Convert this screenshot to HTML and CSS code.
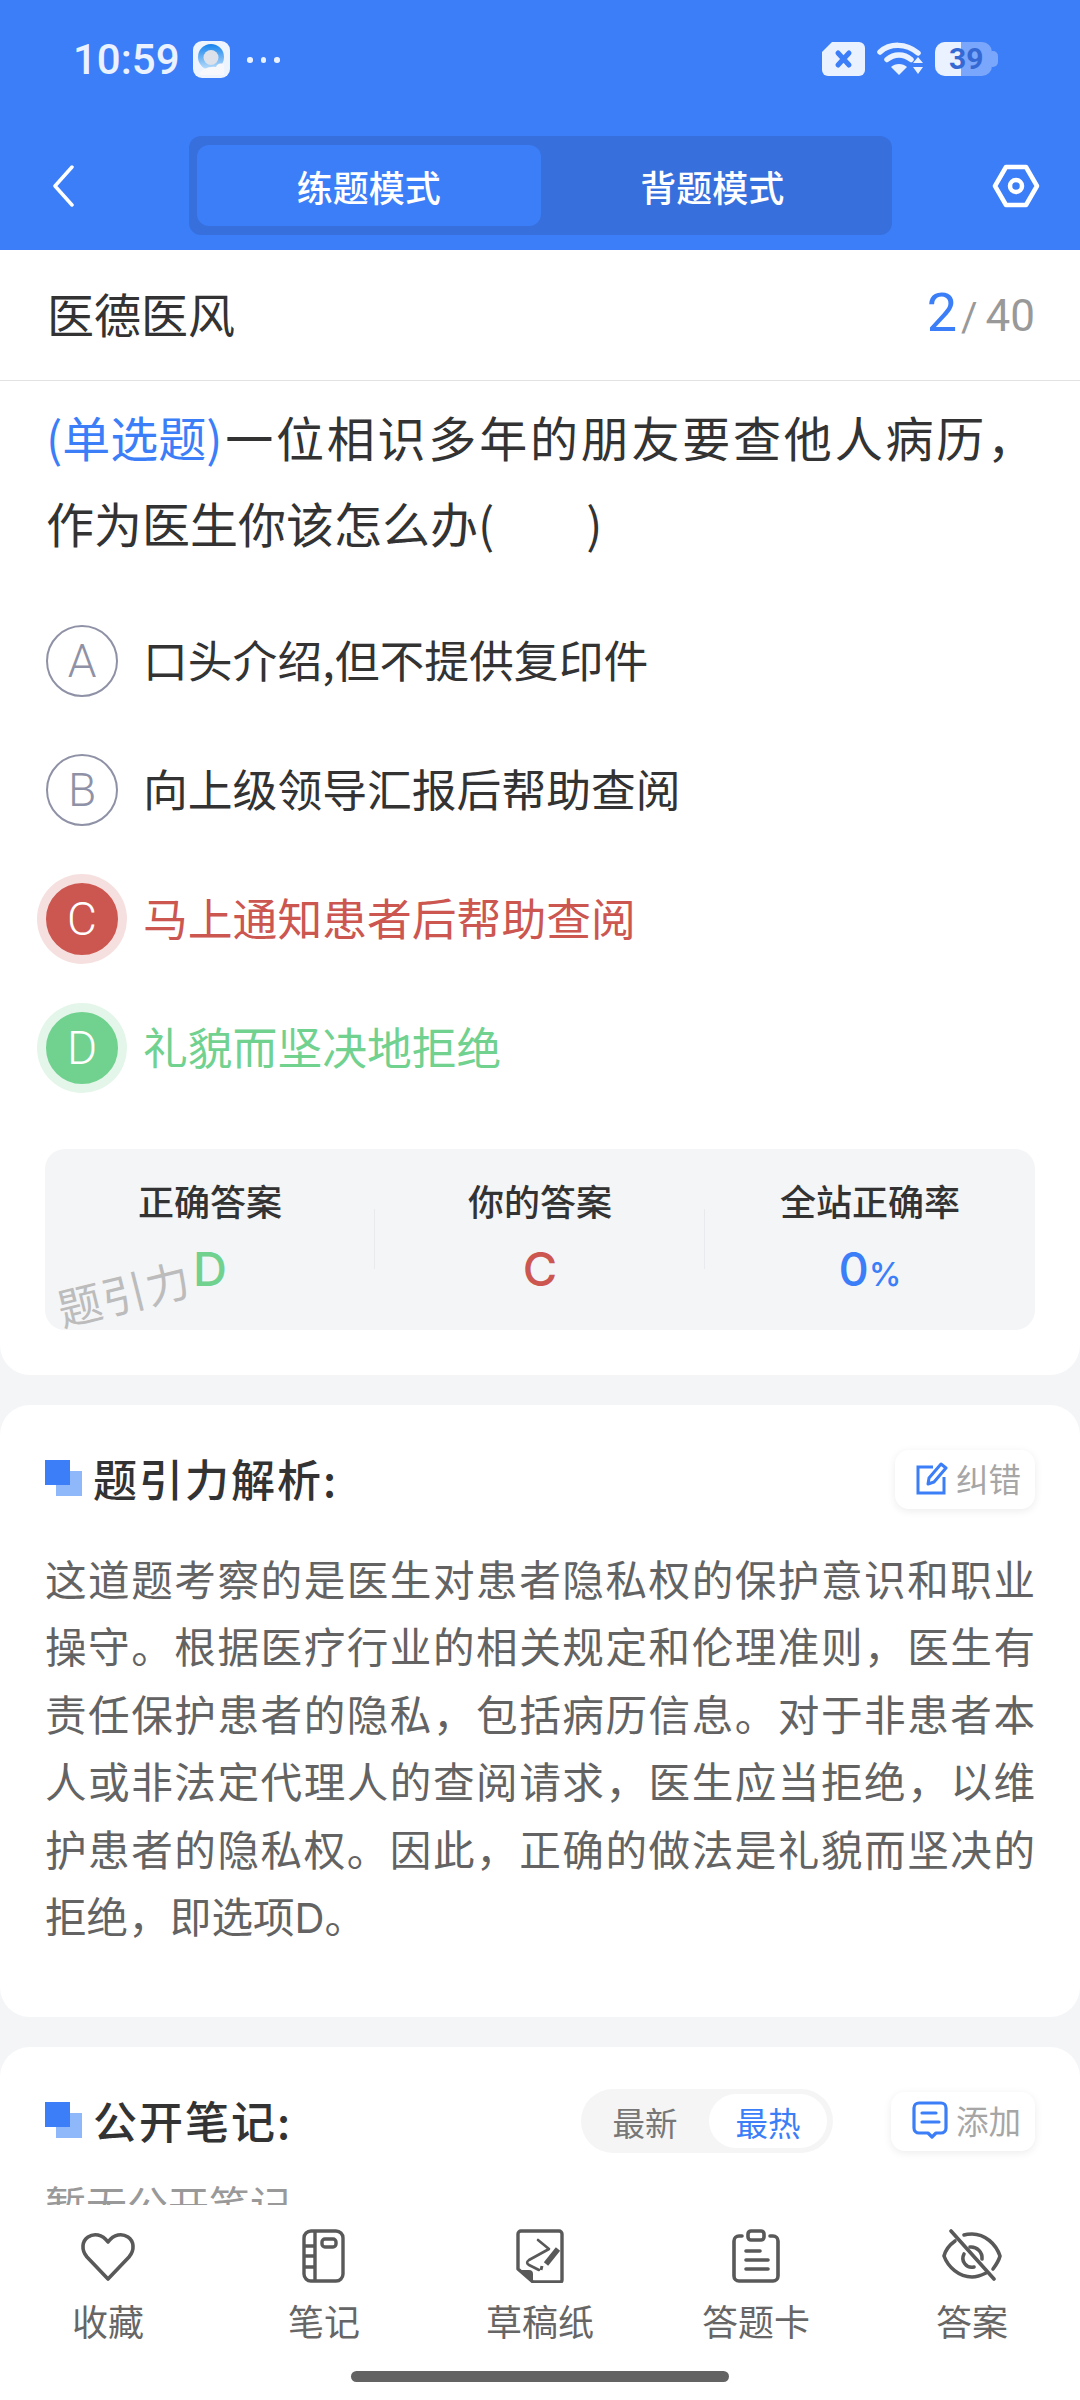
FILE: index.html
```html
<!DOCTYPE html>
<html lang="zh-CN">
<head>
<meta charset="utf-8">
<title>练题模式</title>
<link rel="stylesheet" href="styles.css">
</head>
<body>
<header class="header">
	<div class="status">
		<span class="time">10:59</span>
		<svg class="app-icon" viewBox="0 0 37 37">
			<defs>
				<linearGradient id="ring" x1="0" y1="0" x2="0" y2="1">
					<stop offset="0" stop-color="#1583ee"/>
					<stop offset="1" stop-color="#bfe0fa"/>
				</linearGradient>
			</defs>
			<rect width="37" height="37" rx="9" fill="#eef4fe"/>
			<circle cx="18" cy="16" r="13" fill="url(#ring)"/>
			<circle cx="18" cy="16.500" r="7.500" fill="#dde1e9"/>
			<path d="M6 33c3-5 10-8 17-7 1-3 5-5 8-2v10H8z" fill="#f6f8fc"/>
		</svg>
		<span class="dots"><i></i><i></i><i></i></span>
		<span class="status-right">
			<svg class="sim" viewBox="0 0 43 34">
				<path d="M10 0h27a6 6 0 0 1 6 6v22a6 6 0 0 1-6 6H6a6 6 0 0 1-6-6V10z" fill="#eaf1ff"/>
				<path d="M16 11l11 12M27 11L16 23" stroke="#3b7ef8" stroke-width="5" stroke-linecap="round"/>
			</svg>
			<svg class="wifi" viewBox="0 0 46 33">
				<path d="M3 10C13 1 29 1 41 11" fill="none" stroke="#eaf1ff" stroke-width="5.500" stroke-linecap="round"/>
				<path d="M10 17.500c7-6 17-6 24 0" fill="none" stroke="#eaf1ff" stroke-width="5.500" stroke-linecap="round"/>
				<path d="M14 25c4-4 12-4 16 0l-8 8z" fill="#eaf1ff"/>
				<path d="M36 21l5-6 5 6zM36 25h10l-5 7z" fill="#eaf1ff"/>
			</svg>
			<span class="battery"><span class="battery-fill"></span><span class="battery-num">39</span></span>
		</span>
	</div>
	<nav class="nav">
		<svg class="back" viewBox="0 0 22 42"><path d="M20 2L3 21l17 19" fill="none" stroke="#fff" stroke-width="3.500" stroke-linecap="round" stroke-linejoin="round"/></svg>
		<div class="tabs">
			<span class="tab tab-on">练题模式</span>
			<span class="tab">背题模式</span>
		</div>
		<svg class="gear" viewBox="0 0 48 44">
			<path d="M14 3h20l11 19-11 19H14L3 22z" fill="none" stroke="#fff" stroke-width="4.500" stroke-linejoin="round"/>
			<circle cx="24" cy="22" r="6" fill="none" stroke="#fff" stroke-width="4.500"/>
		</svg>
	</nav>
</header>

<main class="content">
	<section class="card card-first">
		<div class="title-row">
			<span class="title">医德医风</span>
			<span class="count"><b>2</b><em>/</em>40</span>
		</div>
		<div class="question-wrap">
			<p class="question"><span class="q-type">(单选题)</span>一位相识多年的朋友要查他人病历，作为医生你该怎么办(<span class="q-blank"></span>)</p>
			<ul class="options">
				<li class="option"><span class="letter">A</span><span class="opt-text">口头介绍,但不提供复印件</span></li>
				<li class="option"><span class="letter">B</span><span class="opt-text">向上级领导汇报后帮助查阅</span></li>
				<li class="option wrong"><span class="letter">C</span><span class="opt-text">马上通知患者后帮助查阅</span></li>
				<li class="option right"><span class="letter">D</span><span class="opt-text">礼貌而坚决地拒绝</span></li>
			</ul>
			<div class="stats">
				<div class="stat"><span class="stat-label">正确答案</span><span class="stat-val green">D</span></div>
				<div class="stat"><span class="stat-label">你的答案</span><span class="stat-val red">C</span></div>
				<div class="stat"><span class="stat-label">全站正确率</span><span class="stat-val blue">0<small>%</small></span></div>
				<span class="watermark">题引力</span>
			</div>
		</div>
	</section>

	<section class="card card-analysis">
		<div class="card-head">
			<h2 class="head-title"><span class="squares"></span>题引力解析:</h2>
			<span class="chip">
				<svg class="chip-icon" viewBox="0 0 32 34">
					<path d="M17 6H2v26h26V16" fill="none" stroke="#3b7ef8" stroke-width="3"/>
					<path d="M12 23l1-6L25 3l5 4-12 14z" fill="none" stroke="#3b7ef8" stroke-width="3" stroke-linejoin="round"/>
				</svg>
				纠错
			</span>
		</div>
		<p class="analysis">这道题考察的是医生对患者隐私权的保护意识和职业操守。根据医疗行业的相关规定和伦理准则，医生有责任保护患者的隐私，包括病历信息。对于非患者本人或非法定代理人的查阅请求，医生应当拒绝，以维护患者的隐私权。因此，正确的做法是礼貌而坚决的拒绝，即选项D。</p>
	</section>

	<section class="card card-notes">
		<div class="card-head">
			<h2 class="head-title"><span class="squares"></span>公开笔记:</h2>
			<div class="head-tools">
				<div class="toggle">
					<span class="toggle-item">最新</span>
					<span class="toggle-item toggle-on">最热</span>
				</div>
				<span class="chip chip-add">
					<svg class="chip-icon" viewBox="0 0 36 38">
						<path d="M7 2h22a5 5 0 0 1 5 5v20a5 5 0 0 1-5 5h-5l-4 4-4-4H7a5 5 0 0 1-5-5V7a5 5 0 0 1 5-5z" fill="none" stroke="#3b7ef8" stroke-width="3.200" stroke-linejoin="round"/>
						<path d="M10 12h14M10 21h17" stroke="#3b7ef8" stroke-width="3.200" stroke-linecap="round"/>
					</svg>
					添加
				</span>
			</div>
		</div>
		<p class="empty">暂无公开笔记</p>
	</section>
</main>

<footer class="tabbar">
	<div class="tabbar-items">
		<div class="bar-item">
			<svg class="bar-icon" viewBox="0 0 60 54"><path d="M30 50L9 28C3 21 4 12 10 8c6-4 14-3 20 5 6-8 14-9 20-5 6 4 7 13 1 20z" fill="none" stroke="#595959" stroke-width="3.600" stroke-linejoin="round"/></svg>
			<span>收藏</span>
		</div>
		<div class="bar-item">
			<svg class="bar-icon" viewBox="0 0 60 54">
				<g fill="none" stroke="#595959" stroke-width="3.400">
					<rect x="10" y="2" width="39" height="50" rx="7"/>
					<path d="M21 2v50M10 17h11M10 27h11M10 38h11"/>
					<rect x="28" y="10" width="14" height="8" rx="3"/>
				</g>
			</svg>
			<span>笔记</span>
		</div>
		<div class="bar-item">
			<svg class="bar-icon" viewBox="0 0 60 54">
				<path d="M11 2h38a3 3 0 0 1 3 3v46a2 2 0 0 1-2 2H23L8 40V5a3 3 0 0 1 3-3z" fill="none" stroke="#595959" stroke-width="3.400" stroke-linejoin="round"/>
				<path d="M9 41h10q4 0 4 4v7z" fill="#595959"/>
				<path d="M28 11l11 9-20 11c-3 2-2 4 0 5l10 5" fill="none" stroke="#595959" stroke-width="2.600" stroke-linecap="round" stroke-linejoin="round"/>
				<path d="M48 20L36 35" stroke="#595959" stroke-width="5.500"/>
				<path d="M31 41l1-4" stroke="#595959" stroke-width="3"/>
			</svg>
			<span>草稿纸</span>
		</div>
		<div class="bar-item">
			<svg class="bar-icon" viewBox="0 0 60 54">
				<g fill="none" stroke="#595959" stroke-width="3.600" stroke-linecap="round" stroke-linejoin="round">
					<path d="M16 7h-3a5 5 0 0 0-5 5v35a5 5 0 0 0 5 5h34a5 5 0 0 0 5-5V12a5 5 0 0 0-5-5h-3"/>
					<rect x="22" y="2" width="16" height="9" rx="3"/>
					<path d="M20 22h14M20 31h22M20 40h22"/>
				</g>
			</svg>
			<span>答题卡</span>
		</div>
		<div class="bar-item">
			<svg class="bar-icon" viewBox="0 0 60 54">
				<g fill="none" stroke="#595959" stroke-width="3.600" stroke-linecap="round" stroke-linejoin="round">
					<path d="M13 12C6 17 3 23 2 27c4 11 15 21 28 21 5 0 10-2 14-4M22 6c3-1 5-1 8-1 13 0 24 10 28 22-1 4-4 9-7 13"/>
					<path d="M22 25a9 9 0 0 0 10 13M28 18a11 11 0 0 1 12 12"/>
					<path d="M9 2l43 48"/>
				</g>
			</svg>
			<span>答案</span>
		</div>
	</div>
	<div class="home-bar"></div>
</footer>
</body>
</html>
```

FILE: styles.css
```css
* { box-sizing: border-box; }
html, body { margin: 0; padding: 0; }
body {
	width: 1080px;
	height: 2400px;
	display: flex;
	flex-direction: column;
	overflow: hidden;
	background: #f4f5f7;
	color: #333;
	font-family: "Noto Sans CJK SC", "Noto Sans", sans-serif;
}
p, ul, h2 { margin: 0; padding: 0; }
ul { list-style: none; }

/* header */
.header { background: #3b7ef8; height: 250px; flex: none; }
.status { height: 116px; padding: 41px 80px 0 73px; display: flex; align-items: flex-start; }
.time { font-family: Roboto, sans-serif; font-weight: 500; font-size: 42px; line-height: 37px; color: #eaf1ff; width: 120px; }
.app-icon { width: 37px; height: 37px; }
.dots { display: flex; gap: 8px; margin: 16px 0 0 17px; }
.dots i { width: 5.5px; height: 5.5px; border-radius: 50%; background: #eaf1ff; }
.status-right { margin-left: auto; display: flex; gap: 12px; margin-top: 1px; }
.sim { width: 43px; height: 34px; }
.wifi { width: 46px; height: 33px; }
.battery { position: relative; width: 57px; height: 34px; margin-right: 8px; border-radius: 10px; background: #7aa6fb; }
.battery::after { content: ""; position: absolute; right: -6px; top: 9px; width: 6px; height: 16px; border-radius: 0 5px 5px 0; background: #7aa6fb; }
.battery-fill { position: absolute; left: 0; top: 0; bottom: 0; width: 26px; border-radius: 10px 0 0 10px; background: #eaf1ff; }
.battery-num { position: absolute; left: 14px; top: 0; font-family: Roboto, sans-serif; font-weight: 700; font-size: 30px; line-height: 34px; color: #3469d4; }

.nav { margin-top: 20px; height: 99px; display: flex; align-items: center; padding: 0 40px 0 52px; }
.back { width: 22px; height: 42px; flex: none; }
.tabs { margin-left: 115px; width: 703px; height: 99px; padding: 9px 8px; display: flex; background: #3770dd; border-radius: 12px; }
.tab { flex: 1; border-radius: 12px; display: flex; align-items: center; justify-content: center; font-size: 36px; font-weight: 500; color: #fff; }
.tab-on { background: #3b7ef8; }
.gear { width: 48px; height: 44px; margin-left: auto; flex: none; }

/* cards */
.content { flex: 1; min-height: 0; overflow: hidden; }
.card { background: #fff; border-radius: 30px; margin-bottom: 30px; }
.card-first { border-radius: 0 0 30px 30px; padding-bottom: 45px; }

.title-row { height: 131px; padding: 0 45px 6px 47px; display: flex; align-items: center; justify-content: space-between; border-bottom: 1px solid #e2e2e2; }
.title { font-size: 47px; color: #333; }
.count { font-family: Roboto, sans-serif; font-size: 44px; color: #999; display: flex; align-items: baseline; }
.count b { font-weight: 400; font-size: 54px; color: #3b7ef8; }
.count em { font-style: normal; margin: 0 8px 0 4px; font-size: 40px; }

.question-wrap { padding: 12px 45px 0 46px; }
.question { font-size: 48px; line-height: 86px; color: #333; text-align: justify; }
.q-type { display: inline-block; color: #3b7ef8; }
.q-blank { display: inline-block; width: 92px; }

.options { margin-top: 60px; display: flex; flex-direction: column; gap: 57px; }
.option { height: 72px; display: flex; align-items: center; font-size: 44.8px; color: #333; }
.opt-text { padding-bottom: 5px; }
.letter { width: 72px; height: 72px; margin-right: 25px; border: 2px solid #8f92a6; border-radius: 50%; display: flex; align-items: center; justify-content: center; font-family: Roboto, sans-serif; font-weight: 300; font-size: 46px; color: #8f92a6; flex: none; }
.wrong { color: #cc5650; }
.wrong .letter { background: #cc5650; border-color: #cc5650; color: #fff; box-shadow: 0 0 0 9px #f6e0df; }
.right { color: #71d18f; }
.right .letter { background: #71d18f; border-color: #71d18f; color: #fff; box-shadow: 0 0 0 9px #e3f6e9; }

.stats { position: relative; margin-top: 64.5px; height: 181px; width: 990px; margin-left: -1px; background: #f4f5f7; border-radius: 20px; display: flex; }
.stat { flex: 1; position: relative; display: flex; flex-direction: column; align-items: center; }
.stat + .stat::before { content: ""; position: absolute; left: -1px; top: 60px; height: 60px; width: 1px; background: #e9eaed; }
.stat-label { margin-top: 27px; font-size: 36px; line-height: 48px; font-weight: 500; color: #333; }
.stat-val { margin-top: 20px; font-family: Inter, sans-serif; font-weight: 500; font-size: 47px; line-height: 50px; }
.stat-val small { font-size: 33px; }
.green { color: #71d18f; }
.red { color: #cc5650; }
.blue { color: #3b7ef8; }
.watermark { position: absolute; left: 11px; top: 118px; font-size: 44px; line-height: 50px; letter-spacing: 1px; color: #bcbcbc; transform: rotate(-14deg); }

.card-head { height: 59px; display: flex; align-items: center; justify-content: space-between; }
.head-title { display: flex; align-items: center; font-size: 44px; line-height: 59px; font-weight: 500; letter-spacing: 2px; color: #333; padding-bottom: 2px; }
.squares { position: relative; width: 37px; height: 36px; margin-right: 11px; flex: none; }
.squares::before { content: ""; position: absolute; left: 11px; top: 11px; width: 26px; height: 25px; background: #8fb8fb; }
.squares::after { content: ""; position: absolute; left: 0; top: 0; width: 25px; height: 25px; background: #3b7ef8; }

.chip { display: flex; align-items: center; gap: 8px; height: 59px; padding: 0 14px 3px 21px; border-radius: 14px; background: #fff; box-shadow: 0 2px 8px rgba(0, 0, 0, .08); font-size: 32.5px; color: #a6a6a6; }
.chip-icon { width: 32px; height: 34px; flex: none; }
.chip-add .chip-icon { width: 36px; height: 38px; }

.card-analysis { padding: 45px 45px 64px; }
.analysis { margin-top: 39px; font-family: Inter, "Noto Sans CJK SC", sans-serif; font-size: 41.6px; line-height: 67.5px; color: #636363; text-align: justify; }

.card-notes { padding: 45px 45px 60px; }
.head-tools { display: flex; align-items: center; gap: 58px; }
.toggle { width: 252px; height: 64px; padding: 5px 6px 5px 0; display: flex; border-radius: 32px; background: #f5f5f5; font-size: 32.5px; }
.toggle-item { flex: 1; display: flex; align-items: center; justify-content: center; color: #777; }
.toggle-on { flex: none; width: 118px; background: #fff; border-radius: 27px; color: #3b7ef8; }
.empty { margin-top: 19px; font-size: 41px; line-height: 67px; color: #999; }

/* bottom bar */
.tabbar { flex: none; height: 195px; background: #fff; display: flex; flex-direction: column; }
.tabbar-items { display: flex; padding-top: 24px; }
.bar-item { width: 216px; display: flex; flex-direction: column; align-items: center; font-size: 36px; line-height: 48px; color: #666; }
.bar-icon { width: 60px; height: 54px; margin-bottom: 13px; }
.home-bar { width: 378px; height: 11px; margin: 27px auto 0; border-radius: 6px; background: #636363; }
```
